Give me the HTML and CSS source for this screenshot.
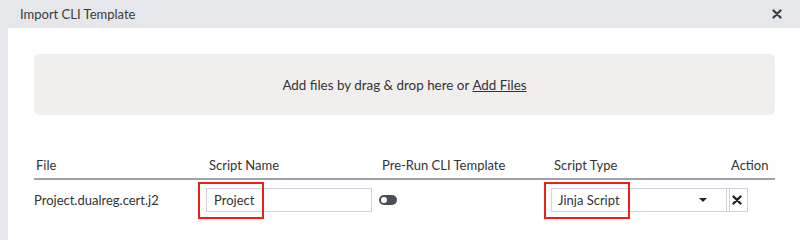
FILE: index.html
```html
<!DOCTYPE html>
<html lang="en">
<head>
  <meta charset="UTF-8" />
  <title>Import CLI Template</title>
  <link rel="stylesheet" href="styles.css">
</head>
<body>
  <div class="modal">
    <div class="modal-header">
      <span class="modal-title">Import CLI Template</span>
      <button class="close-btn" title="Close">
        <svg width="10" height="10" viewBox="0 0 10 10"><path d="M1.5 1.5 L8.5 8.5 M8.5 1.5 L1.5 8.5" stroke="#3b404a" stroke-width="2.4" stroke-linecap="round"/></svg>
      </button>
    </div>

    <div class="modal-body">
      <div class="dropzone">
        Add files by drag &amp; drop here or&nbsp;<a href="#" class="add-link">Add Files</a>
      </div>

      <div class="file-table">
        <div class="th">File</div>
        <div class="th">Script Name</div>
        <div class="th">Pre-Run CLI Template</div>
        <div class="th">Script Type</div>
        <div class="th th-action">Action</div>

        <div class="td">Project.dualreg.cert.j2</div>
        <div class="td">
          <div class="field">
            <input type="text" class="name-input" value="Project">
            <span class="mark mark-name"></span>
          </div>
        </div>
        <div class="td">
          <span class="toggle"><span class="knob"></span></span>
        </div>
        <div class="td">
          <div class="field">
            <div class="select">
              <span>Jinja Script</span>
              <span class="caret"></span>
            </div>
            <span class="mark mark-type"></span>
          </div>
        </div>
        <div class="td">
          <button class="del-btn" title="Remove">
            <svg width="10" height="10" viewBox="0 0 10 10"><path d="M1.5 1.5 L8.5 8.5 M8.5 1.5 L1.5 8.5" stroke="#1f2329" stroke-width="2.4" stroke-linecap="round"/></svg>
          </button>
        </div>
      </div>
    </div>
  </div>
</body>
</html>
```

FILE: styles.css
```css
body { margin: 0; font-family: Lato, "Open Sans", sans-serif; font-size: 13px; color: #333; background: #fff; }
.modal { width: 800px; height: 240px; overflow: hidden; }

.modal-header { height: 28px; background: #e6e7eb; display: flex; align-items: center; justify-content: space-between; padding: 0 17px 0 20px; }
.modal-title { color: #3a3a3a; }
.close-btn { border: none; background: none; padding: 0; width: 12px; height: 12px; display: flex; align-items: center; justify-content: center; cursor: pointer; }

.modal-body { border-left: 8px solid #e6e7eb; height: 212px; padding: 26px 25px 0 26px; box-sizing: border-box; }

.dropzone { height: 61px; background: #f0efee; border-radius: 5px; display: flex; align-items: center; justify-content: center; color: #333; font-size: 13.4px; }
.add-link { color: #333; text-decoration: underline; }

.file-table { margin-top: 41px; display: grid; grid-template-columns: 172px 173px 172px 174px 1fr; }
.th { padding: 0 0 4px 2px; line-height: 18px; border-bottom: 2px solid #9da1a9; color: #333; }
.th:nth-child(2), .th:nth-child(3), .th:nth-child(4) { padding-left: 3px; }
.th-action { padding-left: 6px !important; }
.td { height: 38px; display: flex; align-items: center; padding-top: 2px; box-sizing: border-box; }

.field { position: relative; }
.name-input { width: 166px; height: 24px; box-sizing: border-box; border: 1px solid #cfd2d6; padding: 0 7px; font: inherit; color: #333; outline: none; }
.select { width: 179px; height: 24px; box-sizing: border-box; border: 1px solid #cfd2d6; padding: 0 22px 0 6px; display: flex; align-items: center; justify-content: space-between; }
.caret { width: 0; height: 0; border-left: 4px solid transparent; border-right: 4px solid transparent; border-top: 4px solid #222; }

.mark { position: absolute; border: 2px solid #e8211c; box-sizing: border-box; pointer-events: none; }
.mark-name { left: -8px; top: -6px; width: 66px; height: 37px; }
.mark-type { left: -7px; top: -6px; width: 86px; height: 37px; }

.toggle { width: 18px; height: 10px; border-radius: 5px; background: #4a4f57; display: flex; align-items: center; padding-left: 2px; box-sizing: border-box; }
.knob { width: 6px; height: 6px; border-radius: 50%; background: #fff; }

.del-btn { width: 22px; height: 24px; box-sizing: border-box; border: 1px solid #cfd2d6; background: #fff; padding: 0; display: flex; align-items: center; justify-content: center; margin-left: 1px; }
```
